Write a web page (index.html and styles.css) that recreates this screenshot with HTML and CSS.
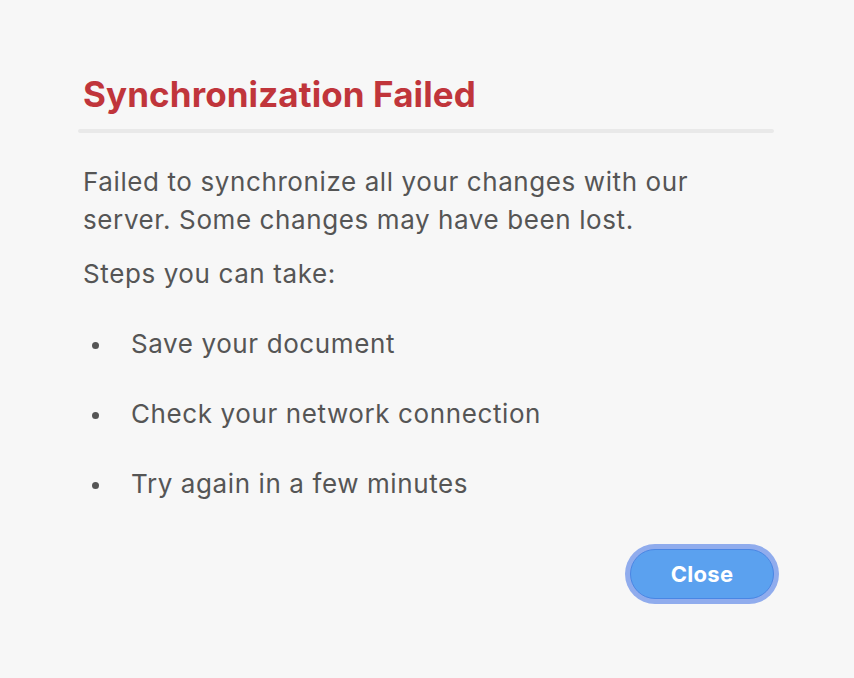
FILE: index.html
```html
<!DOCTYPE html>
<html lang="en">
<head>
<meta charset="utf-8">
<title>Synchronization Failed</title>
<link rel="stylesheet" href="styles.css">
</head>
<body>
<div class="dialog">
  <h1 class="title">Synchronization Failed</h1>
  <div class="divider"></div>
  <p class="msg">Failed to synchronize all your changes with our server. Some changes may have been lost.</p>
  <p class="steps">Steps you can take:</p>
  <ul class="list">
    <li>Save your document</li>
    <li>Check your network connection</li>
    <li>Try again in a few minutes</li>
  </ul>
  <div class="actions">
    <button class="btn">Close</button>
  </div>
</div>
</body>
</html>
```

FILE: styles.css
```css
html, body {
  margin: 0;
  padding: 0;
  background: #f7f7f7;
}
body {
  font-family: Inter, "Noto Sans", sans-serif;
  color: #555555;
  width: 854px;
  height: 678px;
  overflow: hidden;
}
.dialog {
  padding: 72px 80px 0 78px;
}
.title {
  margin: 0 0 0 5px;
  font-size: 35px;
  line-height: 44px;
  font-weight: 700;
  color: #c0353b;
  letter-spacing: 0.1px;
}
.divider {
  margin-top: 13px;
  height: 4px;
  border-radius: 2px;
  background: #e9e9e9;
}
.msg,
.steps,
.list {
  font-size: 26px;
  line-height: 38px;
  letter-spacing: 0.6px;
}
.msg {
  margin: 30px 0 0 5px;
}
.steps {
  margin: 16px 0 0 5px;
}
.list {
  list-style: none;
  margin: 32px 0 0 5px;
  padding: 0;
}
.list li {
  display: flex;
  align-items: center;
  margin-bottom: 32px;
}
.list li::before {
  content: "";
  width: 7px;
  height: 7px;
  border-radius: 50%;
  background: #555555;
  margin: 2px 32px 0 9px;
  flex: none;
}
.actions {
  display: flex;
  justify-content: flex-end;
  margin-top: 46px;
}
.btn {
  font-family: Inter, "Noto Sans", sans-serif;
  font-size: 22px;
  font-weight: 700;
  letter-spacing: 0.3px;
  color: #ffffff;
  background: #5ba1ef;
  border: 1px solid #4a86e4;
  border-radius: 26px;
  width: 144px;
  height: 50px;
  box-shadow: 0 0 0 5px #90aced;
  cursor: pointer;
}
```
